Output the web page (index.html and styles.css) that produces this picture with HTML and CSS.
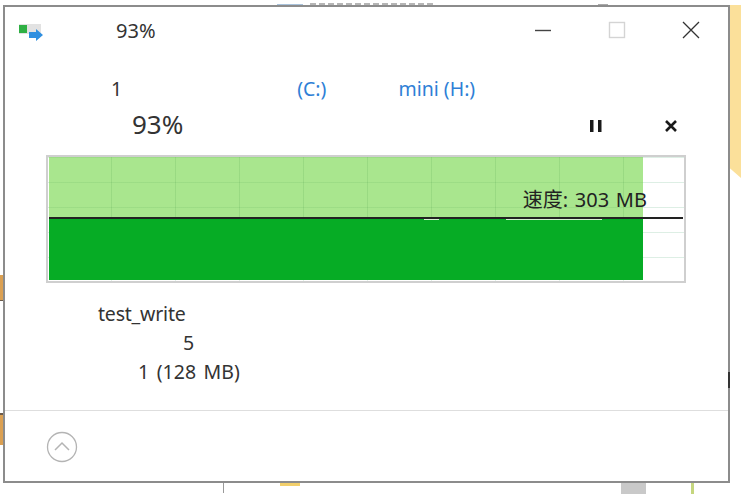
FILE: index.html
```html
<html>

<head>
    <meta charset="UTF-8">
    <title>Copy Progress</title>
    <link rel="stylesheet" href="styles.css">
</head>

<body>
    <div class="desktop">
        <div class="bit top-blue"></div>
        <div class="bit top-text"></div>
        <div class="bit top-dash"></div>
        <div class="bit edge-right"></div>
        <div class="bit edge-left-a"></div>
        <div class="bit edge-left-b"></div>
        <div class="bit edge-bottom-line"></div>
        <div class="bit edge-bottom-yellow"></div>
        <div class="bit edge-bottom-grey"></div>
        <div class="bit edge-bottom-green"></div>

        <div class="window">
            <div class="titlebar">
                <svg class="app-icon" width="26" height="20" viewBox="0 0 26 20">
                    <rect x="1" y="3" width="22" height="10" fill="#e2e2e2" />
                    <rect x="1" y="4" width="8" height="8" fill="#2fb044" />
                    <path d="M11 11h7V8l7 6-7 6v-3h-7z" fill="#2f8fe0" />
                </svg>
                <span class="title-text">93%</span>
                <div class="window-buttons">
                    <svg width="18" height="18" viewBox="0 0 18 18">
                        <path d="M1 9.500h16" stroke="#444" stroke-width="1.400" />
                    </svg>
                    <svg width="18" height="18" viewBox="0 0 18 18">
                        <rect x="1.500" y="1.500" width="15" height="15" fill="none" stroke="#d4d4d4" stroke-width="1.400" />
                    </svg>
                    <svg width="18" height="18" viewBox="0 0 18 18">
                        <path d="M1 1l16 16M17 1L1 17" stroke="#333" stroke-width="1.300" />
                    </svg>
                </div>
            </div>

            <div class="route">
                <span class="route-count">1</span>
                <span class="route-from">(C:)</span>
                <span class="route-to">mini (H:)</span>
            </div>

            <div class="percent-row">
                <span class="percent">93%</span>
                <div class="controls">
                    <svg width="14" height="14" viewBox="0 0 14 14">
                        <path d="M1 1h3.500v12H1zM9 1h3.500v12H9z" fill="#1a1a1a" />
                    </svg>
                    <svg width="14" height="14" viewBox="0 0 14 14">
                        <path d="M2 2l10 10M12 2L2 12" stroke="#1a1a1a" stroke-width="2.600" />
                    </svg>
                </div>
            </div>

            <div class="graph">
                <div class="graph-grid"></div>
                <div class="graph-fill">
                    <div class="fill-top"></div>
                    <div class="fill-bottom"></div>
                </div>
                <div class="speed-line"></div>
                <div class="speed-glint glint-a"></div>
                <div class="speed-glint glint-b"></div>
                <span class="speed-label">速度: 303 MB</span>
            </div>

            <div class="details">
                <div class="detail-name">test_write</div>
                <div class="detail-left">5</div>
                <div class="detail-size">1 (128 MB)</div>
            </div>

            <div class="footer">
                <svg width="32" height="32" viewBox="0 0 32 32">
                    <circle cx="16" cy="16" r="14.500" fill="none" stroke="#b4b4b4" stroke-width="1.300" />
                    <path d="M9 19l7-7 7 7" fill="none" stroke="#b4b4b4" stroke-width="1.500" />
                </svg>
            </div>

            <div class="border-mark"></div>
        </div>
    </div>
</body>

</html>
```

FILE: styles.css
```css
html {
    box-sizing: border-box;
}

*,
*:before,
*:after {
    box-sizing: inherit;
}

body {
    font-family: "Noto Sans", "Noto Sans CJK SC", sans-serif;
    margin: 0;
    background-color: #fff;
    color: #333;
}

.desktop {
    position: relative;
    width: 744px;
    height: 500px;
    padding: 5px 14px 17px 3px;
    overflow: hidden;
}

.window {
    position: relative;
    display: flex;
    flex-direction: column;
    height: 478px;
    background-color: #fff;
    border: 2px solid #8c8c8c;
}

/* bits of the desktop showing round the window */
.bit {
    position: absolute;
}

.top-blue {
    left: 277px;
    top: 4px;
    width: 26px;
    height: 1px;
    background-color: #a9c3dc;
}

.top-text {
    left: 310px;
    top: 3px;
    width: 125px;
    height: 2px;
    background-image: repeating-linear-gradient(to right, #b5b5b5 0 6px, transparent 6px 9px);
}

.top-dash {
    left: 598px;
    top: 4px;
    width: 10px;
    height: 1px;
    background-color: #aaa;
}

.edge-right {
    left: 729px;
    top: 5px;
    width: 12px;
    height: 173px;
    background-color: #fbe09a;
    clip-path: polygon(0 0, 100% 0, 100% 100%, 0 94%);
}

.edge-left-a {
    left: 0;
    top: 275px;
    width: 3px;
    height: 26px;
    background-color: #dba052;
    border-bottom: 1px solid #6b5a4a;
}

.edge-left-b {
    left: 0;
    top: 413px;
    width: 3px;
    height: 32px;
    background-color: #dba052;
    border-top: 2px solid #6b5a4a;
}

.edge-bottom-line {
    left: 223px;
    top: 482px;
    width: 1px;
    height: 11px;
    background-color: #999;
}

.edge-bottom-yellow {
    left: 280px;
    top: 482px;
    width: 20px;
    height: 4px;
    background-color: #f2cf6c;
}

.edge-bottom-grey {
    left: 621px;
    top: 482px;
    width: 25px;
    height: 12px;
    background-color: #c9c9c9;
}

.edge-bottom-green {
    left: 691px;
    top: 482px;
    width: 3px;
    height: 12px;
    background-color: #c5d67e;
}

.border-mark {
    position: absolute;
    right: -2px;
    top: 365px;
    width: 2px;
    height: 16px;
    background-color: #333;
}

.titlebar {
    display: flex;
    align-items: center;
    height: 46px;
    padding: 0 28px 0 13px;
}

.app-icon {
    margin-top: 2px;
}

.title-text {
    margin-left: 72px;
    font-size: 20px;
}

.window-buttons {
    display: flex;
    gap: 56px;
    margin-left: auto;
}

.route {
    display: flex;
    height: 30px;
    margin-top: 20px;
    align-items: center;
    font-size: 19.500px;
    color: #2f7fd6;
}

.route-count {
    margin-left: 106px;
    color: #333;
}

.route-from {
    margin-left: 175px;
}

.route-to {
    margin-left: 72px;
}

.percent-row {
    display: flex;
    align-items: center;
    height: 40px;
    margin-top: 1px;
}

.percent {
    margin-left: 127px;
    font-size: 26px;
}

.controls {
    display: flex;
    gap: 61px;
    margin-top: 4px;
    margin-left: auto;
    margin-right: 50px;
}

.graph {
    position: relative;
    width: 640px;
    height: 128px;
    margin: 11px 0 0 41px;
    background-color: #fff;
    border: 2px solid #cfcfcf;
}

.graph-grid {
    position: absolute;
    inset: 0;
    background-image:
        linear-gradient(to right, rgba(120, 190, 150, 0.2) 1px, transparent 1px),
        linear-gradient(to bottom, rgba(120, 190, 150, 0.25) 1px, transparent 1px);
    background-size: 64px 25px;
    background-position: 63px 25px;
}

.graph-fill {
    position: absolute;
    left: 1px;
    top: 0;
    bottom: 1px;
    display: flex;
    flex-direction: column;
    width: 594px;
}

.fill-top {
    height: 61px;
    background-color: #a9e68e;
    background-image:
        linear-gradient(to right, rgba(80, 160, 80, 0.18) 1px, transparent 1px),
        linear-gradient(to bottom, rgba(80, 160, 80, 0.14) 1px, transparent 1px);
    background-size: 64px 25px;
    background-position: 62px 25px;
}

.fill-bottom {
    flex: 1;
    background-color: #06ac25;
}

.speed-line {
    position: absolute;
    left: 1px;
    right: 1px;
    top: 60px;
    height: 2px;
    background-color: #222;
}

.speed-glint {
    position: absolute;
    top: 62px;
    height: 1px;
    background-color: #d5f2d0;
}

.glint-a {
    left: 376px;
    width: 15px;
}

.glint-b {
    left: 458px;
    width: 96px;
}

.speed-label {
    position: absolute;
    right: 37px;
    top: 31px;
    font-size: 20px;
    line-height: 24px;
    word-spacing: 1.500px;
    white-space: nowrap;
    color: #222;
}

.details {
    display: flex;
    flex-direction: column;
    height: 127px;
    padding-top: 16px;
    font-size: 19.500px;
    line-height: 29px;
}

.detail-name {
    margin-left: 93px;
    letter-spacing: -0.200px;
}

.detail-left {
    margin-left: 178px;
}

.detail-size {
    margin-left: 133px;
    word-spacing: 2.500px;
}

.footer {
    display: flex;
    flex: 1;
    align-items: center;
    padding: 2px 0 0 41px;
    border-top: 1px solid #dedede;
}
```
